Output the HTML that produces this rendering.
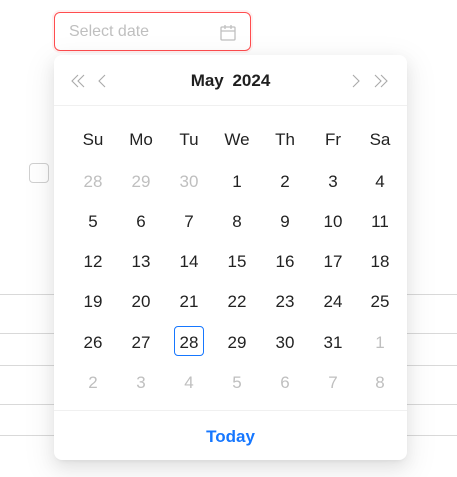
<!DOCTYPE html>
<html><head><style>
body{margin:0;width:457px;height:477px;background:#fff;position:relative;overflow:hidden;font-family:"Liberation Sans",sans-serif}
.line{position:absolute;left:0;width:457px;height:1px;background:#d9d9d9}
.inp{position:absolute;left:54px;top:12px;width:195px;height:37px;border:1px solid #ff4d4f;border-radius:6px;box-shadow:0 0 0 2px rgba(255,77,79,0.08)}
.inp span{position:absolute;left:14px;top:10px;font-size:16px;color:#bfbfbf}
.cb{position:absolute;left:29px;top:163px;width:18px;height:18px;border:1px solid #d0d0d0;border-radius:4px}
.panel{position:absolute;left:54px;top:55px;width:353px;height:405px;background:#fff;border-radius:8px;box-shadow:0 6px 16px rgba(0,0,0,0.08),0 3px 6px -4px rgba(0,0,0,0.12),0 9px 28px 8px rgba(0,0,0,0.05)}
.hd{position:absolute;left:0;top:0;width:353px;height:50px;border-bottom:1px solid #f0f0f0}
.title{position:absolute;left:0;width:353px;top:16px;text-align:center;font-weight:bold;font-size:17px;color:#1f1f1f;word-spacing:4px}
.ft{position:absolute;left:0;top:355px;width:353px;height:50px;border-top:1px solid #f0f0f0;text-align:center;line-height:52px;color:#1677ff;font-weight:bold;font-size:17px}
.c{position:absolute;width:40px;text-align:center;font-size:17px;color:#222;line-height:20px;margin-top:2px}
.g{color:#bfbfbf}
.sel{position:absolute;left:120px;top:271px;width:28px;height:28px;border:1px solid #1677ff;border-radius:4px}
</style></head><body>
<div class="line" style="top:294px"></div>
<div class="line" style="top:333px"></div>
<div class="line" style="top:365px"></div>
<div class="line" style="top:404px"></div>
<div class="line" style="top:435px"></div>
<div class="inp"><span>Select date</span>
<svg style="position:absolute;left:165px;top:11px" width="16" height="17" viewBox="0 0 16 17" fill="none" stroke="#bfbfbf" stroke-width="1.3"><rect x="1" y="3" width="14" height="13" rx="1"/><path d="M1 7h14M5 1v4M11 1v4"/></svg></div>
<div class="cb"></div>
<div class="panel">
<div class="hd">
<svg style="position:absolute;left:16px;top:19px" width="40" height="14" viewBox="0 0 40 14" fill="none" stroke="#aaa" stroke-width="1.1"><path d="M8 1L2 7l6 6M14 1L8 7l6 6M35 1l-6 6 6 6"/></svg>
<div class="title">May 2024</div>
<svg style="position:absolute;left:296px;top:19px" width="42" height="14" viewBox="0 0 42 14" fill="none" stroke="#aaa" stroke-width="1.1"><path d="M3 1l6 6-6 6M25 1l6 6-6 6M31 1l6 6-6 6"/></svg>
</div>
<div class="sel"></div>
<div class="ft">Today</div>
</div>
<div style="position:absolute;left:54px;top:55px">
<div class="c" style="left:19px;top:73px">Su</div><div class="c" style="left:67px;top:73px">Mo</div><div class="c" style="left:115px;top:73px">Tu</div><div class="c" style="left:163px;top:73px">We</div><div class="c" style="left:211px;top:73px">Th</div><div class="c" style="left:259px;top:73px">Fr</div><div class="c" style="left:306px;top:73px">Sa</div>

<div class="c g" style="left:19px;top:115px">28</div><div class="c g" style="left:67px;top:115px">29</div><div class="c g" style="left:115px;top:115px">30</div><div class="c" style="left:163px;top:115px">1</div><div class="c" style="left:211px;top:115px">2</div><div class="c" style="left:259px;top:115px">3</div><div class="c" style="left:306px;top:115px">4</div>

<div class="c" style="left:19px;top:155px">5</div><div class="c" style="left:67px;top:155px">6</div><div class="c" style="left:115px;top:155px">7</div><div class="c" style="left:163px;top:155px">8</div><div class="c" style="left:211px;top:155px">9</div><div class="c" style="left:259px;top:155px">10</div><div class="c" style="left:306px;top:155px">11</div>

<div class="c" style="left:19px;top:195px">12</div><div class="c" style="left:67px;top:195px">13</div><div class="c" style="left:115px;top:195px">14</div><div class="c" style="left:163px;top:195px">15</div><div class="c" style="left:211px;top:195px">16</div><div class="c" style="left:259px;top:195px">17</div><div class="c" style="left:306px;top:195px">18</div>

<div class="c" style="left:19px;top:235px">19</div><div class="c" style="left:67px;top:235px">20</div><div class="c" style="left:115px;top:235px">21</div><div class="c" style="left:163px;top:235px">22</div><div class="c" style="left:211px;top:235px">23</div><div class="c" style="left:259px;top:235px">24</div><div class="c" style="left:306px;top:235px">25</div>

<div class="c" style="left:19px;top:276px">26</div><div class="c" style="left:67px;top:276px">27</div><div class="c" style="left:115px;top:276px">28</div><div class="c" style="left:163px;top:276px">29</div><div class="c" style="left:211px;top:276px">30</div><div class="c" style="left:259px;top:276px">31</div><div class="c g" style="left:306px;top:276px">1</div>

<div class="c g" style="left:19px;top:316px">2</div><div class="c g" style="left:67px;top:316px">3</div><div class="c g" style="left:115px;top:316px">4</div><div class="c g" style="left:163px;top:316px">5</div><div class="c g" style="left:211px;top:316px">6</div><div class="c g" style="left:259px;top:316px">7</div><div class="c g" style="left:306px;top:316px">8</div>
</div>
</body></html>
